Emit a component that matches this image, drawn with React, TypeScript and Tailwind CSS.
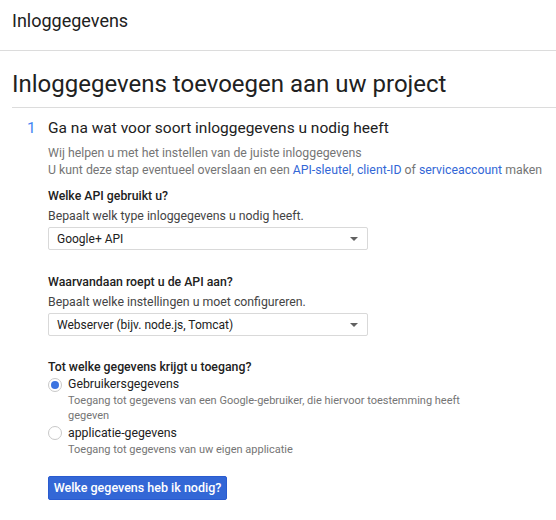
import React from "react";

function Select({ value }: { value: string }) {
  return (
    <div className="flex h-[23px] w-[320px] items-center justify-between rounded-[2px] border border-[#d9d9d9] bg-white pl-[8px] pr-[9px] text-[12px] leading-[16px] text-[#212121]">
      <span>{value}</span>
      <svg width="8" height="4" viewBox="0 0 8 4">
        <path d="M0 0 L8 0 L4 4 Z" fill="#616161" />
      </svg>
    </div>
  );
}

function Radio({ checked }: { checked?: boolean }) {
  return (
    <div className="flex h-[14px] w-[14px] items-center justify-center rounded-full border border-[#c8c8c8] bg-white">
      {checked && <div className="h-[8px] w-[8px] rounded-full bg-[#3b73e0]" />}
    </div>
  );
}

export default function App() {
  return (
    <div className="min-h-[520px] w-[556px] bg-white text-[#212121]" style={{ fontFamily: "Roboto, 'Liberation Sans', sans-serif" }}>
      <div className="h-[51px] border-b border-[#dcdcdc] pl-[12px] pt-[9px] text-[18px] leading-[24px]">Inloggegevens</div>
      <div className="ml-[12px]">
        <div className="border-b border-[#dcdcdc] pt-[17px] pb-[7px] text-[24px] leading-[32px]">
          Inloggegevens toevoegen aan uw project
        </div>
      </div>
      <div className="flex pt-[10px]">
        <div className="w-[48px] pl-[27px] text-[15.5px] leading-[20px] text-[#4285f4]">1</div>
        <div className="flex flex-col">
          <div className="whitespace-nowrap text-[15.5px] leading-[20px]">Ga na wat voor soort inloggegevens u nodig heeft</div>
          <div className="mt-[7px] whitespace-nowrap text-[12.3px] leading-[17px] text-[#757575]">
            <div>Wij helpen u met het instellen van de juiste inloggegevens</div>
            <div>
              U kunt deze stap eventueel overslaan en een <span className="text-[#3367d6]">API-sleutel</span>,{" "}
              <span className="text-[#3367d6]">client-ID</span> of <span className="text-[#3367d6]">serviceaccount</span> maken
            </div>
          </div>

          <div className="mt-[9px] text-[12.3px] font-medium leading-[17px]">Welke API gebruikt u?</div>
          <div className="mt-[3px] text-[12.3px] leading-[17px] text-[#444]">Bepaalt welk type inloggegevens u nodig heeft.</div>
          <div className="mt-[2px]"><Select value="Google+ API" /></div>

          <div className="mt-[24px] text-[12.3px] font-medium leading-[17px]">Waarvandaan roept u de API aan?</div>
          <div className="mt-[3px] text-[12.3px] leading-[17px] text-[#444]">Bepaalt welke instellingen u moet configureren.</div>
          <div className="mt-[2px]"><Select value="Webserver (bijv. node.js, Tomcat)" /></div>

          <div className="mt-[23px] text-[12.3px] font-medium leading-[17px]">Tot welke gegevens krijgt u toegang?</div>
          <div className="flex flex-col">
            <div className="flex h-[17px] items-center gap-[6px]">
              <Radio checked />
              <span className="text-[12.3px] leading-[17px]">Gebruikersgegevens</span>
            </div>
            <div className="ml-[20px] w-[420px] text-[11px] leading-[15px] text-[#757575]">
              Toegang tot gegevens van een Google-gebruiker, die hiervoor toestemming heeft gegeven
            </div>
            <div className="mt-[1.5px] flex h-[17px] items-center gap-[6px]">
              <Radio />
              <span className="text-[12.3px] leading-[17px]">applicatie-gegevens</span>
            </div>
            <div className="ml-[20px] text-[11px] leading-[15px] text-[#757575]">Toegang tot gegevens van uw eigen applicatie</div>
          </div>

          <div className="mt-[18px]">
            <button className="h-[24px] w-[179px] rounded-[2px] border border-[#2a5bd0] bg-[#3367d6] text-center text-[12.5px] font-medium leading-[16px] text-white">
              Welke gegevens heb ik nodig?
            </button>
          </div>
        </div>
      </div>
    </div>
  );
}
